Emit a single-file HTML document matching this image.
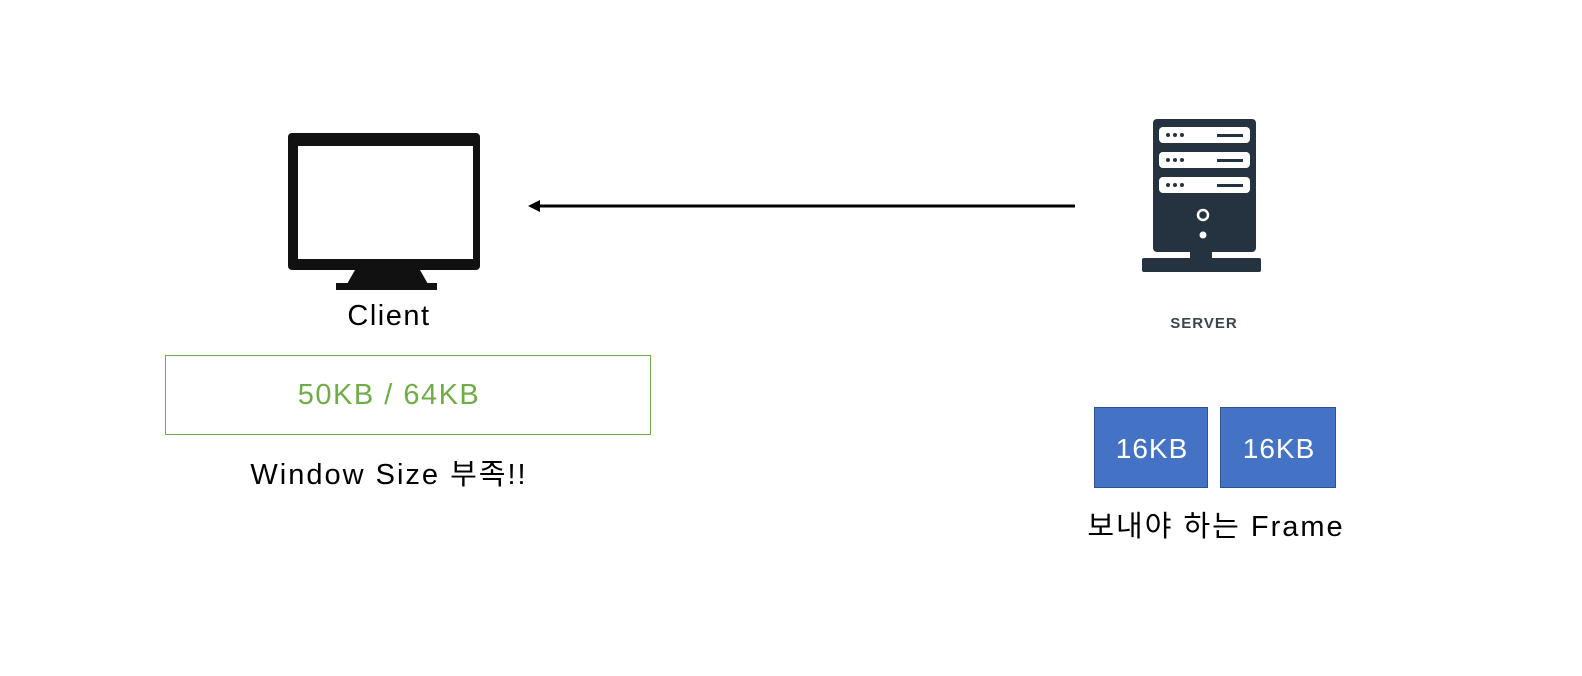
<!DOCTYPE html>
<html><head><meta charset="utf-8"><style>
body{margin:0;width:1582px;height:676px;background:#fff;position:relative;overflow:hidden;font-family:"Liberation Sans","Noto Sans CJK KR",sans-serif;}
.t{position:absolute;text-align:center;white-space:nowrap;transform:translateX(-50%);line-height:1;}
.b{position:absolute;box-sizing:border-box;}
</style></head><body>
<svg width="1582" height="676" style="position:absolute;left:0;top:0">
<rect x="288" y="133" width="192" height="137" rx="4" fill="#111"/>
<rect x="298" y="146" width="175" height="113" fill="#fff"/>
<polygon points="355,270 420,270 428,284 347,284" fill="#111"/>
<rect x="336" y="283" width="101" height="7" fill="#111"/>
<line x1="536" y1="206" x2="1075" y2="206" stroke="#000" stroke-width="3"/>
<polygon points="528,206 540,200 540,212" fill="#000"/>
<g transform="translate(10,0)">
<rect x="1143" y="119" width="103" height="133" rx="4" fill="#253340"/>
<rect x="1132" y="258" width="119" height="14" rx="2" fill="#253340"/>
<rect x="1180" y="248" width="22" height="12" fill="#253340"/>
<g fill="#fff">
<rect x="1149" y="127" width="91" height="16" rx="4"/>
<rect x="1149" y="152" width="91" height="16" rx="4"/>
<rect x="1149" y="177" width="91" height="16" rx="4"/>
</g>
<g fill="#253340">
<circle cx="1158" cy="135" r="2"/><circle cx="1165" cy="135" r="2"/><circle cx="1172" cy="135" r="2"/>
<circle cx="1158" cy="160" r="2"/><circle cx="1165" cy="160" r="2"/><circle cx="1172" cy="160" r="2"/>
<circle cx="1158" cy="185" r="2"/><circle cx="1165" cy="185" r="2"/><circle cx="1172" cy="185" r="2"/>
<rect x="1207" y="134" width="26" height="3"/><rect x="1207" y="159" width="26" height="3"/><rect x="1207" y="184" width="26" height="3"/>
</g>
<circle cx="1193" cy="215" r="5" fill="none" stroke="#fff" stroke-width="2.5"/>
<circle cx="1193" cy="235" r="3.5" fill="#fff"/>
</g>
</svg>
<div class="t" style="left:1204px;top:316px;font-size:15px;font-weight:bold;color:#3a4550;letter-spacing:1px">SERVER</div>
<div class="t" style="left:389px;top:302px;font-size:29px;letter-spacing:1.5px;color:#000">Client</div>
<div class="b" style="left:165px;top:355px;width:486px;height:80px;border:1px solid #70ad47"></div>
<div class="t" style="left:389px;top:381px;font-size:29px;letter-spacing:1.5px;color:#70ad47">50KB / 64KB</div>
<div class="t" style="left:389px;top:461px;font-size:29px;letter-spacing:2px;color:#000">Window Size 부족!!</div>
<div class="b" style="left:1094px;top:407px;width:114px;height:81px;background:#4472c4;border:1px solid #2f528f"></div>
<div class="b" style="left:1220px;top:407px;width:116px;height:81px;background:#4472c4;border:1px solid #2f528f"></div>
<div class="t" style="left:1152px;top:435px;font-size:28px;letter-spacing:1px;color:#fff">16KB</div>
<div class="t" style="left:1279px;top:435px;font-size:28px;letter-spacing:1px;color:#fff">16KB</div>
<div class="t" style="left:1216px;top:513px;font-size:29px;letter-spacing:2px;color:#000">보내야 하는 Frame</div>
</body></html>
